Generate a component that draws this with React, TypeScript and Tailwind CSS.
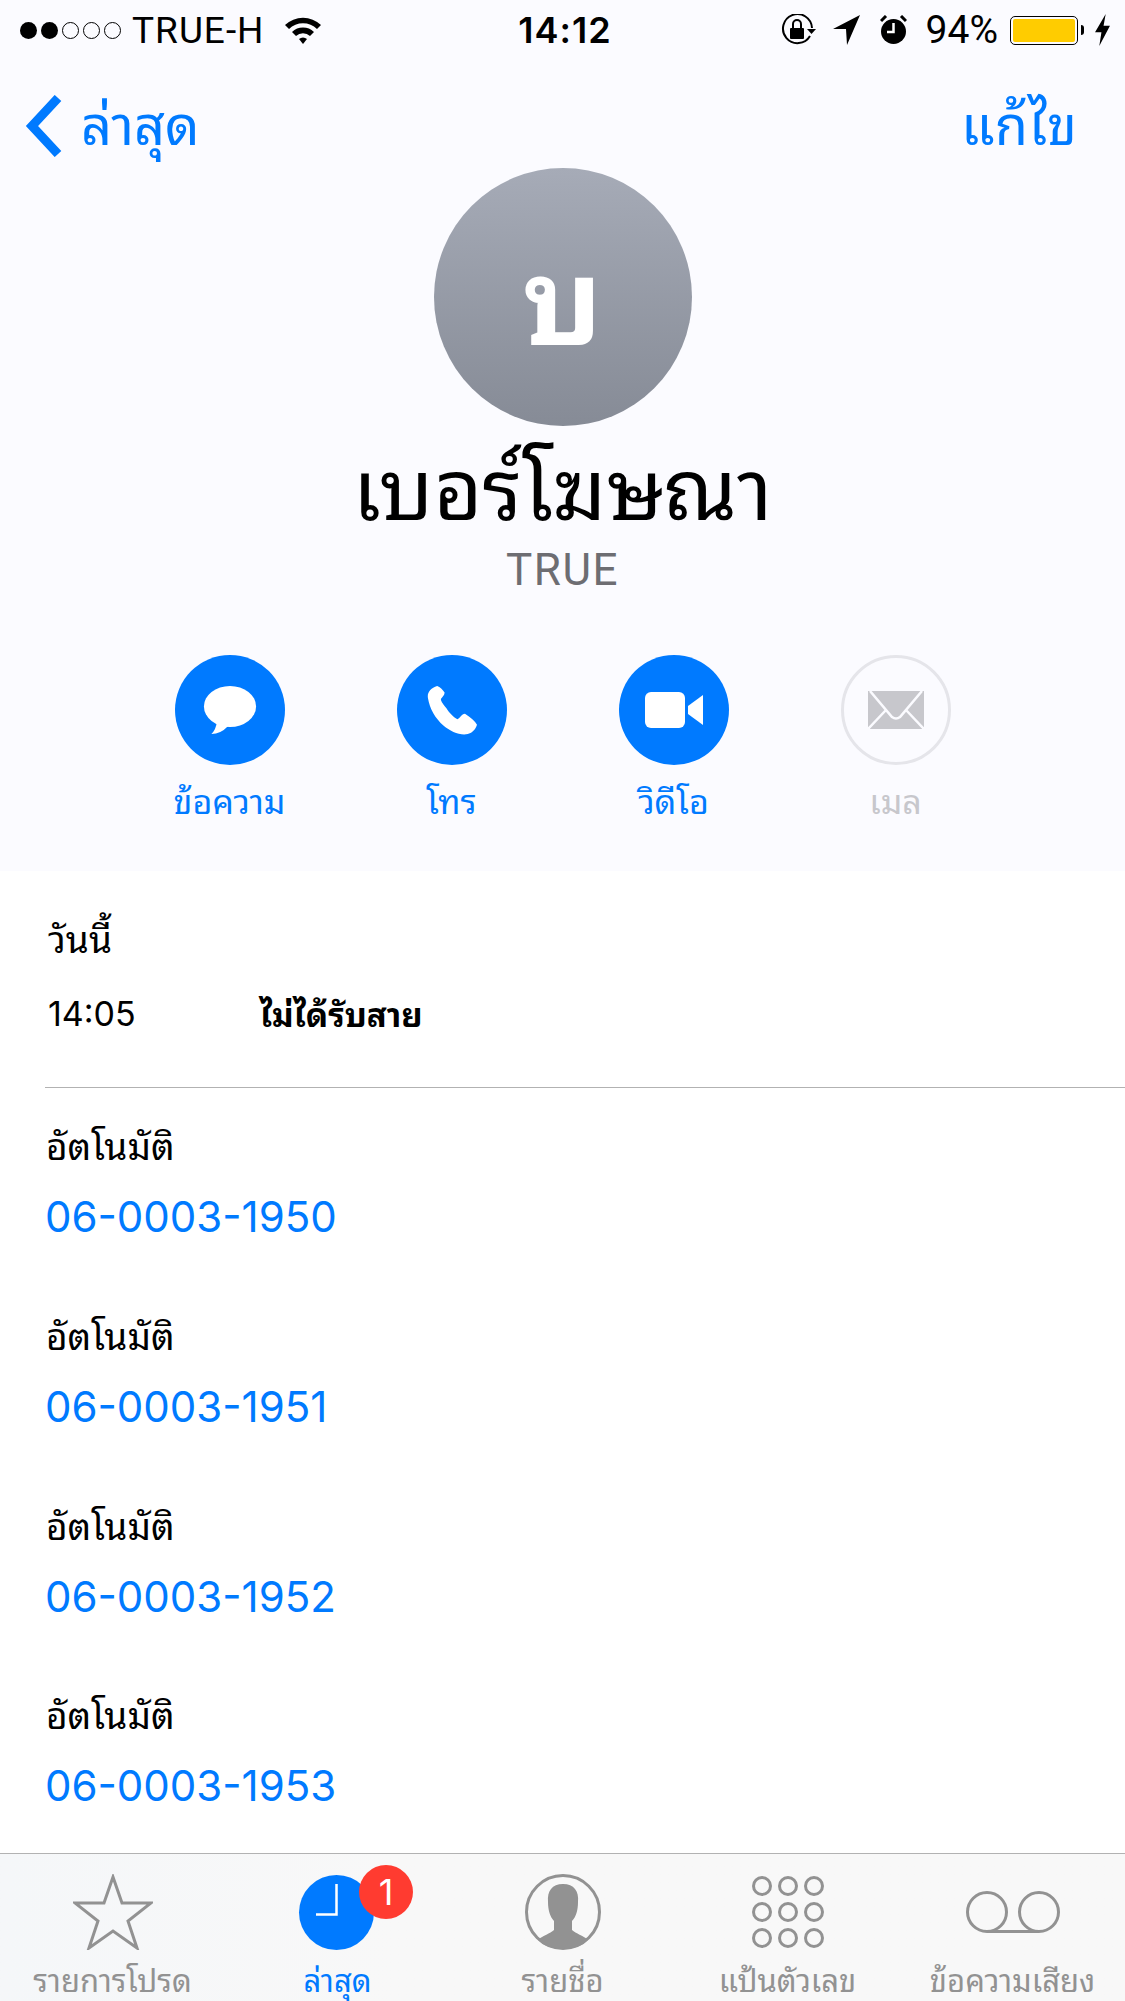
const thai = "font-['Noto_Sans_Thai_Looped','Noto_Sans_Thai','Noto_Sans',Inter,sans-serif]";

const numbers = ["06-0003-1950", "06-0003-1951", "06-0003-1952", "06-0003-1953"];

const SignalDots = () => (
  <div className="flex gap-[4px]">
    {[true, true, false, false, false].map((filled, i) => (
      <span
        key={i}
        className={
          filled
            ? "w-[17px] h-[17px] rounded-full bg-black"
            : "w-[17px] h-[17px] rounded-full border border-black"
        }
      />
    ))}
  </div>
);

const StatusBar = () => (
  <div className="h-[60px] grid grid-cols-3 items-center pl-[20px] pr-[15px] text-black font-['Inter',sans-serif]">
    <div className="flex items-center gap-[19px]">
      <div className="flex items-center gap-[11px]">
        <SignalDots />
        <span className="font-['Roboto',sans-serif] text-[37px] tracking-[1px] leading-none">TRUE-H</span>
      </div>
      <svg width="38" height="28" viewBox="0 0 38 28">
        <path d="M1 9 A26 26 0 0 1 37 9 L33 13 A20 20 0 0 0 5 13 Z" />
        <path d="M8 16 A16 16 0 0 1 30 16 L26 20 A10 10 0 0 0 12 20 Z" />
        <path d="M15 23 A6 6 0 0 1 23 23 L19 28 Z" />
      </svg>
    </div>
    <div className="text-center font-semibold text-[36px] tracking-[1px] leading-none">14:12</div>
    <div className="flex items-center justify-end">
      <svg width="36" height="32" viewBox="0 0 36 32" className="mr-[17px]">
        <path d="M30 22 A14.5 14.5 0 1 1 32 14" fill="none" stroke="black" strokeWidth="2" />
        <path d="M27 15 L36 15 L31.5 20 Z" />
        <rect x="10" y="14" width="14" height="11" rx="1" />
        <path d="M13 14 V10 A4 4 0 0 1 21 10 V14" fill="none" stroke="black" strokeWidth="2" />
      </svg>
      <svg width="27" height="30" viewBox="0 0 27 30" className="mr-[20px]">
        <path d="M27 0 L14 30 L13 14 L0 14 Z" />
      </svg>
      <svg width="27" height="30" viewBox="0 0 27 30" className="mr-[19px]">
        <circle cx="13.5" cy="16.5" r="12.5" />
        <path d="M13.5 8 V17 H7" fill="none" stroke="white" strokeWidth="2.5" />
        <path d="M1 6 L6 1 M26 6 L21 1" stroke="black" strokeWidth="3" />
      </svg>
      <span className="font-['Roboto',sans-serif] text-[39px] leading-none mr-[12px]">94%</span>
      <div className="w-[68px] h-[29px] rounded-[5px] border border-black p-[2px] mr-[3px]">
        <div className="w-full h-full bg-[#ffcc00] rounded-[2px]" />
      </div>
      <div className="w-[3px] h-[10px] bg-black rounded-r-full mr-[11px]" />
      <svg width="15" height="32" viewBox="0 0 14 30">
        <path d="M10 0 L0 17 H6 L4 30 L14 11 H8 Z" />
      </svg>
    </div>
  </div>
);

const ActionButton = ({
  label,
  disabled,
  children,
}: {
  label: string;
  disabled?: boolean;
  children: React.ReactNode;
}) => (
  <div className="w-[222px] flex flex-col items-center">
    <div
      className={
        disabled
          ? "w-[110px] h-[110px] rounded-full border-[3px] border-[#e5e5ea] flex items-center justify-center"
          : "w-[110px] h-[110px] rounded-full bg-[#007aff] flex items-center justify-center"
      }
    >
      {children}
    </div>
    <span
      className={
        disabled
          ? `${thai} mt-[9px] text-[34px] leading-[50px] text-[#c7c7cc]`
          : `${thai} mt-[9px] text-[34px] leading-[50px] text-[#007aff]`
      }
    >
      {label}
    </span>
  </div>
);

const Header = () => (
  <div className="h-[871px] bg-[#fbfbff] flex flex-col">
    <StatusBar />
    <div className={`${thai} h-[108px] flex items-start justify-between pl-[25px] pr-[48px] text-[#007aff] text-[54px]`}>
      <div className="flex items-start gap-[18px] pt-[35px]">
        <svg width="38" height="62" viewBox="0 0 38 62">
          <path d="M33 3 L7 31 L33 59" fill="none" stroke="#007aff" strokeWidth="9" />
        </svg>
        <span className="leading-[52px]">ล่าสุด</span>
      </div>
      <span className="pt-[35px] leading-[52px]">แก้ไข</span>
    </div>
    <div className="flex flex-col items-center">
      <div className="w-[258px] h-[258px] rounded-full bg-gradient-to-b from-[#a6abb7] to-[#868b96] flex items-center justify-center pb-[12px]">
        <span className={`${thai} text-white font-bold text-[120px] leading-none`}>บ</span>
      </div>
      <div className={`${thai} text-black text-[84px] leading-[100px] mt-[6px]`}>เบอร์โฆษณา</div>
      <div className="font-['Roboto',sans-serif] text-[#6d6d72] text-[44px] tracking-[1.5px] leading-[50px] mt-[13px]">TRUE</div>
    </div>
    <div className="flex justify-center mt-[60px]">
      <ActionButton label="ข้อความ">
        <svg width="54" height="50" viewBox="0 0 58 56" fill="white" preserveAspectRatio="none">
          <ellipse cx="29" cy="24" rx="28" ry="23" />
          <path d="M15 41 Q14 50 9 55 Q19 55 27 46 Z" />
        </svg>
      </ActionButton>
      <ActionButton label="โทร">
        <svg width="50" height="50" viewBox="0 0 54 54" fill="white">
          <path d="M11 1 C4 3 0 8 1 14 C3 26 9 36 18 44 C25 50 36 55 44 53 C48 52 52 49 54 43 C52 39 47 35 41 31 C38 31 36 35 33 37 C29 35 24 30 21 25 C18 21 15 18 15 15 C17 12 19 11 19 8 C17 5 14 2 11 1 Z" />
        </svg>
      </ActionButton>
      <ActionButton label="วิดีโอ">
        <svg width="58" height="36" viewBox="0 0 58 36" fill="white">
          <rect x="0" y="0" width="40" height="36" rx="6" />
          <path d="M43 14 L58 3 V33 L43 22 Z" />
        </svg>
      </ActionButton>
      <ActionButton label="เมล" disabled>
        <svg width="56" height="38" viewBox="0 0 56 38">
          <rect width="56" height="38" fill="#c7c7cc" />
          <path d="M2 0 L24 26 Q28 29 32 26 L54 0 M0 38 L18 19 M56 38 L38 19" fill="none" stroke="#fbfbff" strokeWidth="2.5" />
        </svg>
      </ActionButton>
    </div>
  </div>
);

const History = () => (
  <div className="flex-1 bg-white pl-[46px] overflow-hidden">
    <div className={`${thai} text-black text-[37px] leading-[46px] pt-[43px] ml-[2px]`}>วันนี้</div>
    <div className="flex items-center h-[46px] mt-[31px]">
      <span className="font-['Inter',sans-serif] text-[34px] w-[212px] ml-[2px] leading-none">14:05</span>
      <span className={`${thai} text-[33px] font-bold leading-none pb-[4px]`}>ไม่ได้รับสาย</span>
    </div>
    <div className="mt-[50px] h-[1px] bg-[#b2b2b2] -ml-[1px]" />
    <div className="pt-[33px]">
      {numbers.map((number) => (
        <div key={number} className="h-[189.8px]">
          <div className={`${thai} text-black text-[37px] leading-[46px]`}>อัตโนมัติ</div>
          <div className="font-['Inter',sans-serif] text-[#007aff] text-[42px] -ml-[1px] leading-[50px] mt-[25px]">{number}</div>
        </div>
      ))}
    </div>
  </div>
);

const TabItem = ({
  label,
  active,
  children,
}: {
  label: string;
  active?: boolean;
  children: React.ReactNode;
}) => (
  <div className="flex-1 flex flex-col items-center relative">
    <div className="h-[76px] mt-[20px] flex items-center justify-center">{children}</div>
    <span
      className={
        active
          ? `${thai} text-[31px] leading-[44px] mt-[6px] text-[#007aff] whitespace-nowrap`
          : `${thai} text-[31px] leading-[44px] mt-[6px] text-[#929292] whitespace-nowrap`
      }
    >
      {label}
    </span>
  </div>
);

const TabBar = () => (
  <div className="h-[148px] bg-gradient-to-r from-[#f5f7f9] to-[#f8f8f8] to-[35%] border-t border-[#b2b2b2] flex overflow-hidden">
    <TabItem label="รายการโปรด">
      <svg width="80" height="76" viewBox="0 0 80 76">
        <path d="M40 3 L49 29 L78 29 L55 47 L64 74 L40 57 L16 74 L25 47 L2 29 L31 29 Z" fill="none" stroke="#929292" strokeWidth="3" />
      </svg>
    </TabItem>
    <TabItem label="ล่าสุด" active>
      <div className="relative -ml-[2px]">
        <div className="w-[75px] h-[75px] rounded-full bg-[#007aff] flex items-center justify-center pr-[20px] pb-[24px]">
          <svg width="22" height="32" viewBox="0 0 22 32">
            <path d="M20.5 0 V30.5 H0" fill="none" stroke="white" strokeWidth="2.5" />
          </svg>
        </div>
        <div className="absolute -top-[10px] -right-[39px] w-[54px] h-[54px] rounded-full bg-[#ff3b30] flex items-center justify-center text-white font-['Inter',sans-serif] text-[36px] leading-none">
          1
        </div>
      </div>
    </TabItem>
    <TabItem label="รายชื่อ">
      <svg width="76" height="76" viewBox="0 0 76 76">
        <circle cx="38" cy="38" r="36.5" fill="none" stroke="#929292" strokeWidth="3" />
        <path d="M38 10 C27 10 22 17 23 28 C23 36 25 43 29 47 L29 56 C25 60 18 61 13 66 C19 72 28 75 38 75 C48 75 57 72 63 66 C58 61 51 60 47 56 L47 47 C51 43 53 36 53 28 C54 17 49 10 38 10 Z" fill="#929292" />
      </svg>
    </TabItem>
    <TabItem label="แป้นตัวเลข">
      <div className="grid grid-cols-3 gap-x-[6px] gap-y-[6px]">
        {Array.from({ length: 9 }, (_, i) => (
          <span key={i} className="w-[20px] h-[20px] rounded-full border-[3px] border-[#929292]" />
        ))}
      </div>
    </TabItem>
    <TabItem label="ข้อความเสียง">
      <svg width="94" height="42" viewBox="0 0 94 42">
        <circle cx="21" cy="21" r="19.5" fill="none" stroke="#929292" strokeWidth="3" />
        <circle cx="73" cy="21" r="19.5" fill="none" stroke="#929292" strokeWidth="3" />
        <path d="M21 40.5 H73" stroke="#929292" strokeWidth="3" />
      </svg>
    </TabItem>
  </div>
);

export default function App() {
  return (
    <div className="w-[1125px] h-[2001px] overflow-hidden flex flex-col bg-white">
      <Header />
      <History />
      <TabBar />
    </div>
  );
}
